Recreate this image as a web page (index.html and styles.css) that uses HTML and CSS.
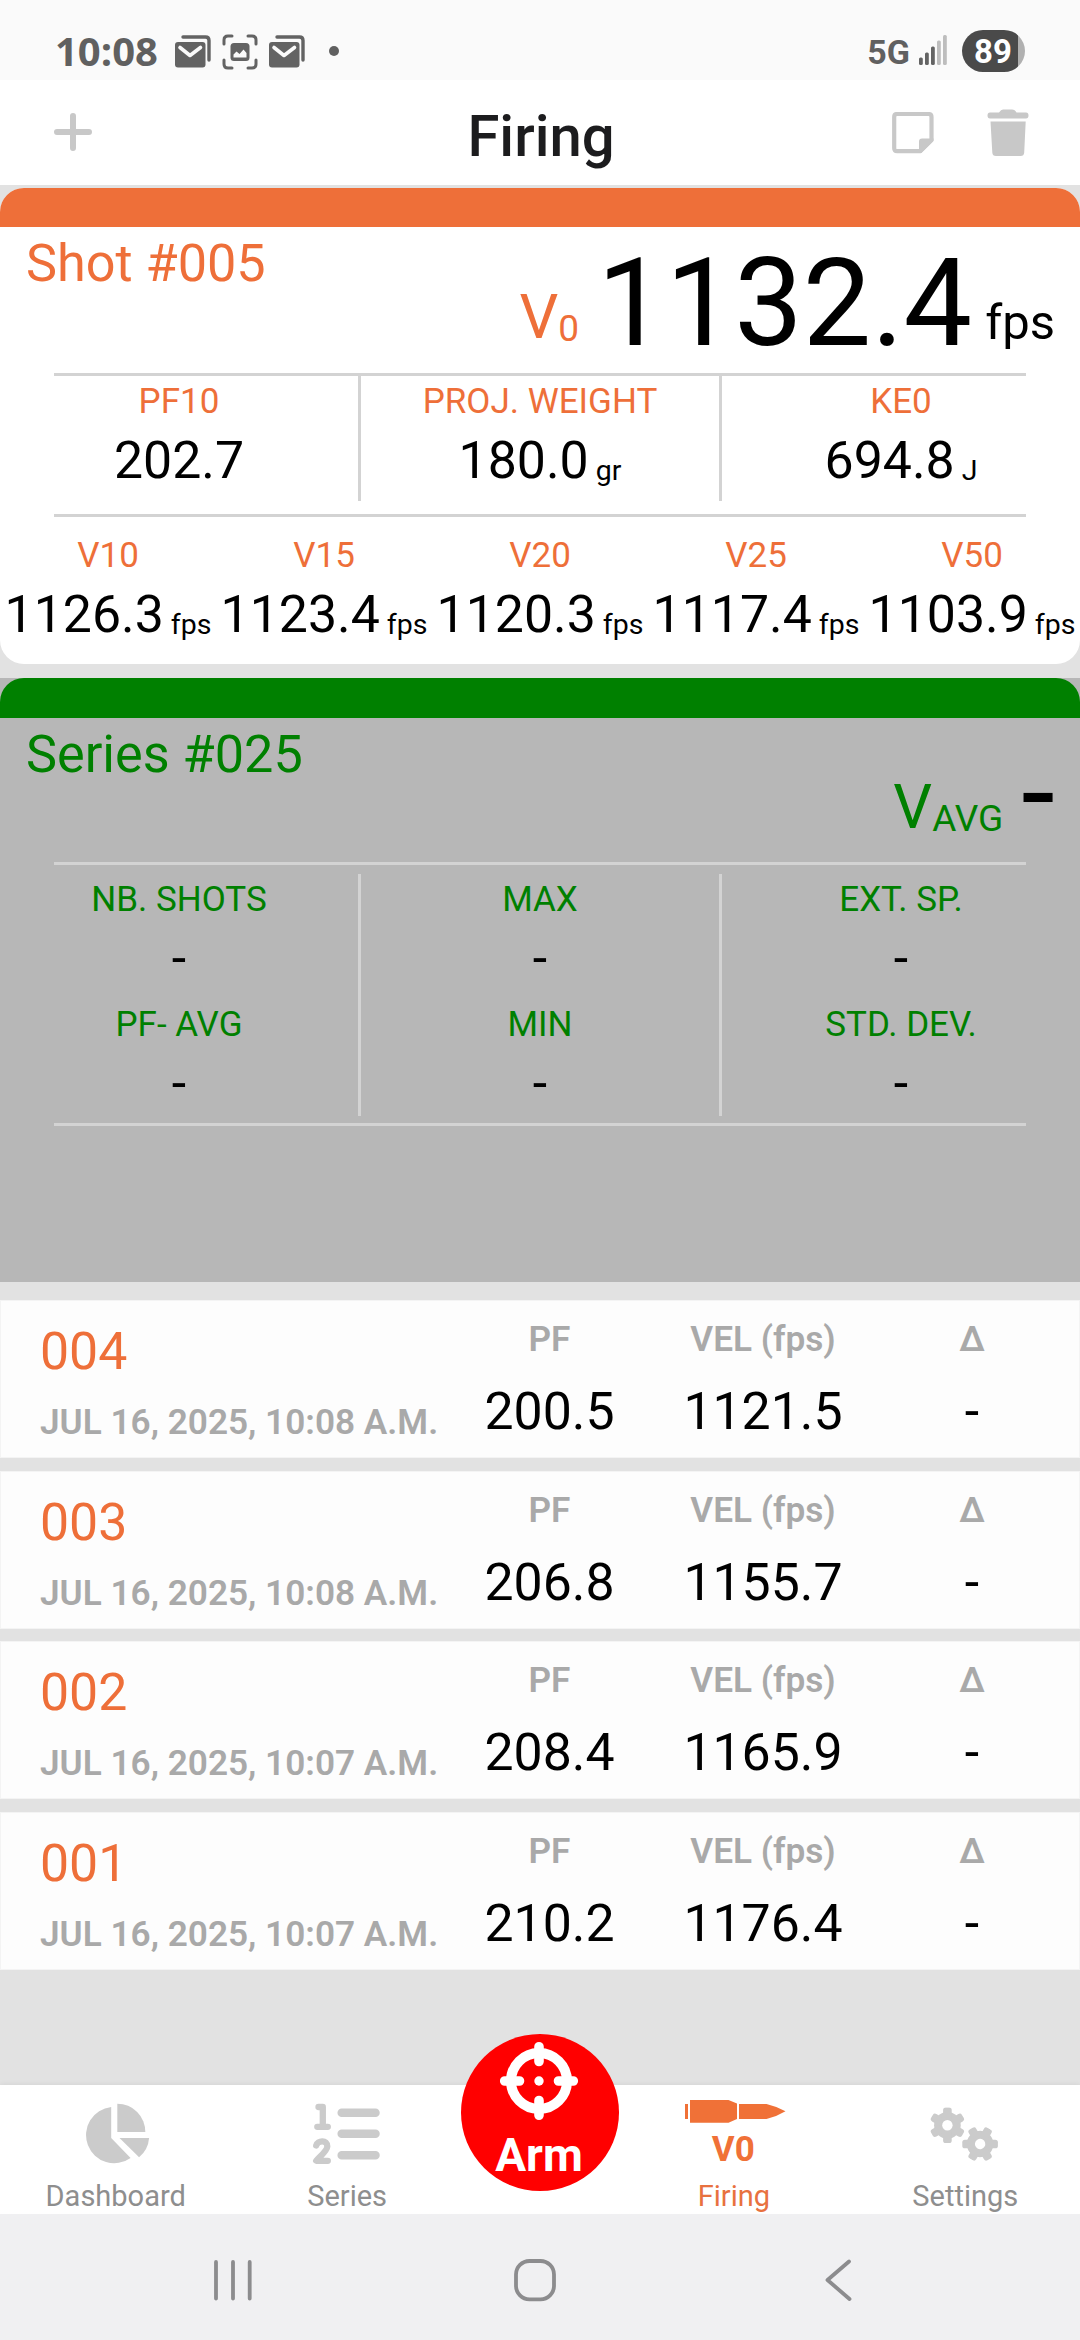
FILE: index.html
```html
<!DOCTYPE html>
<html lang="en">
<head>
<meta charset="utf-8">
<title>Firing</title>
<link rel="stylesheet" href="styles.css">
</head>
<body>
<svg class="defs" width="0" height="0" aria-hidden="true">
  <symbol id="mail" viewBox="0 0 38 34">
    <path d="M9 2H31.5Q35 2 35 5.500V25" fill="none" stroke="#636363" stroke-width="3.400" stroke-linecap="round"/>
    <rect x="1" y="7" width="30.500" height="25.500" rx="3" fill="#636363"/>
    <path d="M6 12.500L16 20.500L26.500 12.500" fill="none" stroke="#fafafa" stroke-width="3.600" stroke-linecap="round" stroke-linejoin="round"/>
  </symbol>
  <symbol id="gear" viewBox="-18 -18 36 36">
    <g fill="#cbcbcb">
      <circle r="13.300"/>
      <rect x="-4.300" y="-17.800" width="8.600" height="35.600" rx="2.600"/>
      <rect x="-4.300" y="-17.800" width="8.600" height="35.600" rx="2.600" transform="rotate(60)"/>
      <rect x="-4.300" y="-17.800" width="8.600" height="35.600" rx="2.600" transform="rotate(120)"/>
    </g>
    <circle r="5.200" fill="#fff"/>
  </symbol>
</svg>

<div class="screen">
  <div class="status">
    <span class="clock">10:08</span>
    <svg class="status-mail" width="38" height="34"><use href="#mail"/></svg>
    <svg class="status-shot" width="36" height="36" viewBox="0 0 36 36">
      <path d="M2 10V6Q2 2 6 2H10M26 2H30Q34 2 34 6V10M34 26V30Q34 34 30 34H26M10 34H6Q2 34 2 30V26" fill="none" stroke="#636363" stroke-width="3" stroke-linecap="round"/>
      <rect x="8.500" y="9" width="19" height="18" rx="3.500" fill="#636363"/>
      <path d="M11.500 23.500V20.500L14.500 17.500L17.500 20L21.500 15.500L24.500 19V23.500Z" fill="#fafafa"/>
    </svg>
    <svg class="status-mail2" width="38" height="34"><use href="#mail"/></svg>
    <span class="more-dot"></span>
    <span class="network">5G</span>
    <svg class="signal" width="29" height="30" viewBox="0 0 29 30">
      <g fill="#636363"><rect x="0" y="22.500" width="3.800" height="7.500" rx="1.500"/><rect x="6" y="17.500" width="3.800" height="12.500" rx="1.500"/><rect x="12" y="11.500" width="3.800" height="18.500" rx="1.500"/></g>
      <g fill="#bdbdbd"><rect x="18" y="5.500" width="3.800" height="24.500" rx="1.500"/><rect x="24" y="0" width="3.800" height="30" rx="1.500"/></g>
    </svg>
    <span class="battery">89</span>
  </div>

  <header class="topbar">
    <svg class="add" width="40" height="40" viewBox="0 0 40 40"><path d="M20 4V36M4 20H36" stroke="#c8c8c8" stroke-width="6" stroke-linecap="round"/></svg>
    <h1 class="title">Firing</h1>
    <div class="actions">
      <svg width="42" height="42" viewBox="0 0 42 42"><path d="M5 2H36.500Q39.500 2 39.500 5V28L28 39.200H5Q2.200 39.200 2.200 36.200V5Q2.200 2 5 2Z" fill="none" stroke="#c8c8c8" stroke-width="4.200" stroke-linejoin="round"/><path d="M27 41V29.500Q27 26.500 30 26.500H41.500V29L29.500 41Z" fill="#c8c8c8"/></svg>
      <svg width="42" height="48" viewBox="0 0 42 48"><path d="M3 3.500H12Q14 0.500 16 0.500H25Q28 0.500 29.500 3.500H39Q41.500 3.500 41.500 6.500Q41.500 9.500 39 9.500H3Q0.500 9.500 0.500 6.500Q0.500 3.500 3 3.500ZM3.500 12.500H38.700L37.200 43.500Q37 47 33.500 47H9Q5.500 47 5.300 43.500Z" fill="#c8c8c8"/></svg>
    </div>
  </header>

  <section class="card shot">
    <div class="bar"></div>
    <div class="head">
      <h2 class="name">Shot #005</h2>
      <div class="readout"><span class="sym">V</span><span class="sub">0</span><span class="big">1132.4</span><span class="fps">fps</span></div>
    </div>
    <div class="rule"></div>
    <div class="thirds">
      <div class="cell"><div class="label">PF10</div><div class="value">202.7</div></div>
      <div class="cell"><div class="label">PROJ. WEIGHT</div><div class="value">180.0<span class="unit">gr</span></div></div>
      <div class="cell"><div class="label">KE0</div><div class="value">694.8<span class="unit">J</span></div></div>
    </div>
    <div class="rule"></div>
    <div class="fifths">
      <div class="cell"><div class="label">V10</div><div class="value">1126.3<span class="unit">fps</span></div></div>
      <div class="cell"><div class="label">V15</div><div class="value">1123.4<span class="unit">fps</span></div></div>
      <div class="cell"><div class="label">V20</div><div class="value">1120.3<span class="unit">fps</span></div></div>
      <div class="cell"><div class="label">V25</div><div class="value">1117.4<span class="unit">fps</span></div></div>
      <div class="cell"><div class="label">V50</div><div class="value">1103.9<span class="unit">fps</span></div></div>
    </div>
  </section>

  <section class="card series">
    <div class="bar"></div>
    <div class="head">
      <h2 class="name">Series #025</h2>
      <div class="readout"><span class="sym">V</span><span class="sub">AVG</span><span class="big">-</span></div>
    </div>
    <div class="rule"></div>
    <div class="thirds">
      <div class="cell"><div class="label">NB. SHOTS</div><div class="value">-</div><div class="label">PF- AVG</div><div class="value">-</div></div>
      <div class="cell"><div class="label">MAX</div><div class="value">-</div><div class="label">MIN</div><div class="value">-</div></div>
      <div class="cell"><div class="label">EXT. SP.</div><div class="value">-</div><div class="label">STD. DEV.</div><div class="value">-</div></div>
    </div>
    <div class="rule"></div>
  </section>

  <div class="list">
    <div class="row">
      <div class="id"><div class="num">004</div><div class="date">JUL 16, 2025, 10:08 A.M.</div></div>
      <div class="col"><div class="key">PF</div><div class="val">200.5</div></div>
      <div class="col"><div class="key">VEL (fps)</div><div class="val">1121.5</div></div>
      <div class="col"><div class="key">Δ</div><div class="val">-</div></div>
    </div>
    <div class="row">
      <div class="id"><div class="num">003</div><div class="date">JUL 16, 2025, 10:08 A.M.</div></div>
      <div class="col"><div class="key">PF</div><div class="val">206.8</div></div>
      <div class="col"><div class="key">VEL (fps)</div><div class="val">1155.7</div></div>
      <div class="col"><div class="key">Δ</div><div class="val">-</div></div>
    </div>
    <div class="row">
      <div class="id"><div class="num">002</div><div class="date">JUL 16, 2025, 10:07 A.M.</div></div>
      <div class="col"><div class="key">PF</div><div class="val">208.4</div></div>
      <div class="col"><div class="key">VEL (fps)</div><div class="val">1165.9</div></div>
      <div class="col"><div class="key">Δ</div><div class="val">-</div></div>
    </div>
    <div class="row">
      <div class="id"><div class="num">001</div><div class="date">JUL 16, 2025, 10:07 A.M.</div></div>
      <div class="col"><div class="key">PF</div><div class="val">210.2</div></div>
      <div class="col"><div class="key">VEL (fps)</div><div class="val">1176.4</div></div>
      <div class="col"><div class="key">Δ</div><div class="val">-</div></div>
    </div>
  </div>

  <nav class="tabs">
    <div class="tab">
      <svg width="120" height="94" viewBox="0 0 120 94" fill="#cbcbcb"><path d="M55.200 53V22A28.200 28.200 0 1 0 74.600 73Z"/><path d="M61.300 47V18.700A28 28 0 0 1 89.300 47Z"/><path d="M63.500 53H93.100A28 28 0 0 1 83.100 72.300Z"/></svg>
      <span>Dashboard</span>
    </div>
    <div class="tab">
      <svg width="120" height="94" viewBox="0 0 120 94" fill="none" stroke="#cbcbcb" stroke-linecap="round" stroke-linejoin="round"><path d="M54.700 27.700H88.500M54.700 48.800H88.500M54.700 70.300H88.500" stroke-width="8.500"/><path d="M31.500 22H35.800V41.800M30.300 41.800H40.800M29.200 60.500C30.500 55 40.500 54.500 40.300 61.500C40.200 65.500 35 69.500 29.200 75.800H40.800" stroke-width="6.300"/></svg>
      <span>Series</span>
    </div>
    <div class="arm-slot">
      <div class="arm">
        <svg width="80" height="80" viewBox="-40 -40 80 80" fill="none" stroke="#fff" stroke-linecap="round"><circle r="28" stroke-width="10"/><path d="M0 -34.300V-19.500M0 34.300V19.500M-34.300 0H-19.500M34.300 0H19.500" stroke-width="9.600"/><circle r="4.700" fill="#fff" stroke="none"/></svg>
        <span>Arm</span>
      </div>
    </div>
    <div class="tab right active">
      <svg width="120" height="94" viewBox="0 0 120 94" fill="#f07137"><rect x="11" y="19" width="3" height="15"/><path d="M16 15H54.500L63 18.500V34L54.500 37.700H16ZM65 19H92.500Q103 21.500 111.500 26.300Q103 31.500 92.500 34H65Z"/><text class="v0" x="59.300" y="76" text-anchor="middle">V0</text></svg>
      <span>Firing</span>
    </div>
    <div class="tab right">
      <svg width="120" height="94" viewBox="0 0 120 94"><use href="#gear" x="24.400" y="22.300" width="36" height="36"/><g transform="rotate(30 75.100 59)"><use href="#gear" x="57.100" y="41" width="36" height="36"/></g></svg>
      <span>Settings</span>
    </div>
  </nav>

  <div class="sysnav">
    <svg width="1080" height="126" viewBox="0 0 1080 126" fill="none" stroke="#8c8c8e" stroke-width="3.800" stroke-linecap="round" stroke-linejoin="round"><path d="M216 48V84.500M233 48V84.500M249.700 48V84.500M849 47.500L827.500 66L849.500 85"/><rect x="516" y="47" width="38" height="38.300" rx="13.500"/></svg>
  </div>
</div>
</body>
</html>
```
FILE: styles.css
```css
* { box-sizing: border-box; }

body {
  margin: 0;
  background: #e2e2e2;
  font-family: Roboto, "Liberation Sans", sans-serif;
  color: #000;
}

h1, h2 { margin: 0; font-weight: 400; }
svg { display: block; flex: none; }
.defs { position: absolute; }

.screen {
  width: 1080px;
  height: 2340px;
  display: flex;
  flex-direction: column;
  overflow: hidden;
}
.screen > * { flex: none; }

/* status bar */
.status {
  height: 80px;
  padding: 0 55px;
  background: #fafafa;
  display: flex;
  align-items: flex-start;
  color: #606060;
}
.clock {
  width: 119px;
  padding-top: 26px;
  font: 700 40px/50px "Open Sans", sans-serif;
}
.status-mail { margin-top: 35px; }
.status-shot { margin: 34px 0 0 10px; }
.status-mail2 { margin: 35px 0 0 10px; }
.more-dot {
  width: 10px;
  height: 10px;
  margin: 46px 0 0 23px;
  border-radius: 50%;
  background: #606060;
}
.network {
  margin: 32px 0 0 auto;
  font-size: 34px;
  line-height: 40px;
  font-weight: 700;
}
.signal { margin: 35px 0 0 9px; }
.battery {
  width: 63px;
  height: 42px;
  margin: 30px 0 0 14px;
  padding-right: 1px;
  border-radius: 21px;
  background: linear-gradient(90deg, #4a4a4a 56px, #b0b0b0 56px);
  color: #fff;
  font-size: 33px;
  line-height: 43px;
  font-weight: 700;
  text-align: center;
}

/* header */
.topbar {
  height: 105px;
  padding: 0 51px 0 53px;
  background: #fff;
  display: grid;
  grid-template-columns: 1fr auto 1fr;
}
.add { margin-top: 32px; }
.title {
  margin-top: 22px;
  font-size: 58px;
  line-height: 68px;
  font-weight: 500;
  color: #1c1c1e;
}
.actions {
  display: flex;
  justify-content: flex-end;
  gap: 53px;
  padding-top: 29px;
}
.actions svg:first-child { margin-top: 3px; }

/* measurement cards */
.shot {
  height: 476px;
  margin-top: 3px;
  background: #fff;
  border-radius: 24px;
  overflow: hidden;
  --accent: #ee6f39;
}
.series {
  height: 604px;
  margin-top: 14px;
  background: #b7b7b7;
  --accent: #008000;
}
.bar { height: 39px; background: var(--accent); }
.series .bar { height: 40px; border-radius: 24px 24px 0 0; }
.head {
  height: 146px;
  padding: 6px 25px 0 26px;
  display: flex;
  justify-content: space-between;
  align-items: flex-start;
  color: var(--accent);
}
.series .head { height: 144px; }
.name { font-size: 52.200px; line-height: 62px; }
.readout {
  margin-top: 11px;
  font-size: 122px;
  line-height: 120px;
  white-space: nowrap;
}
.series .readout { margin-top: 10px; }
.readout span { line-height: 0; }
.sym { font-size: 61px; vertical-align: 7px; }
.sub { font-size: 37px; vertical-align: 4px; }
.big { margin-left: 18px; color: #000; }
.fps { margin-left: 13px; font-size: 49px; vertical-align: 6px; color: #000; }

.rule { height: 3px; margin: 0 54px; background: #d3d3d3; }
.thirds {
  display: grid;
  grid-template-columns: 361px 361px 1fr;
  height: 125px;
  margin-bottom: 13px;
}
.series .thirds { height: 242px; margin: 9px 0 7px; }
.thirds .cell { padding-top: 5px; border-right: 3px solid #d3d3d3; }
.thirds .cell:last-child { border-right: 0; }
.fifths { display: grid; grid-template-columns: repeat(5, 216px); padding-top: 18px; }
.cell { text-align: center; white-space: nowrap; }
.label { font-size: 35px; line-height: 42px; color: var(--accent); }
.value { margin-top: 7px; font-size: 51.800px; line-height: 62px; }
.value + .label { margin-top: 14px; }
.unit { margin-left: 7px; font-size: 28.500px; line-height: 0; vertical-align: -2px; }

/* shot list */
.list { display: flex; flex-direction: column; gap: 12.600px; margin-top: 18px; }
.row {
  height: 158px;
  display: grid;
  grid-template-columns: 442px 213px 214px 204px;
  background: #fdfdfd;
  border: 1px solid #f4f4f4;
}
.id { padding: 20px 0 0 39px; white-space: nowrap; }
.num { font-size: 51.800px; line-height: 62px; color: #ee6f39; }
.date { margin-top: 18px; }
.date, .key { font-size: 35.200px; line-height: 42px; font-weight: 600; color: #a9a9a9; }
.col { padding-top: 17px; text-align: center; white-space: nowrap; }
.val { margin-top: 21px; font-size: 51.800px; line-height: 62px; }

/* tab bar */
.tabs {
  height: 129px;
  margin-top: auto;
  background: #fff;
  display: grid;
  grid-template-columns: 3fr 3fr 2fr 3fr 3fr;
  box-shadow: 0 -1px 5px rgba(0, 0, 0, .06);
}
.tab {
  display: flex;
  flex-direction: column;
  align-items: center;
  font-size: 29px;
  line-height: 34px;
  color: #8e8e8e;
}
.tab.right { padding-left: 2px; }
.tab.active { color: #e8713f; }
.v0 { font-size: 35px; font-weight: 700; }
.arm-slot { position: relative; }
.arm {
  position: absolute;
  left: 50%;
  top: -51px;
  width: 158px;
  height: 157px;
  margin-left: -79px;
  padding: 7px 2px 0 0;
  border-radius: 50%;
  background: #f00;
  color: #fff;
  display: flex;
  flex-direction: column;
  align-items: center;
  font-size: 46px;
  line-height: 54px;
  font-weight: 700;
}
.arm span { margin-top: 7px; }

.sysnav { height: 126px; background: #f0f0f2; }
```
